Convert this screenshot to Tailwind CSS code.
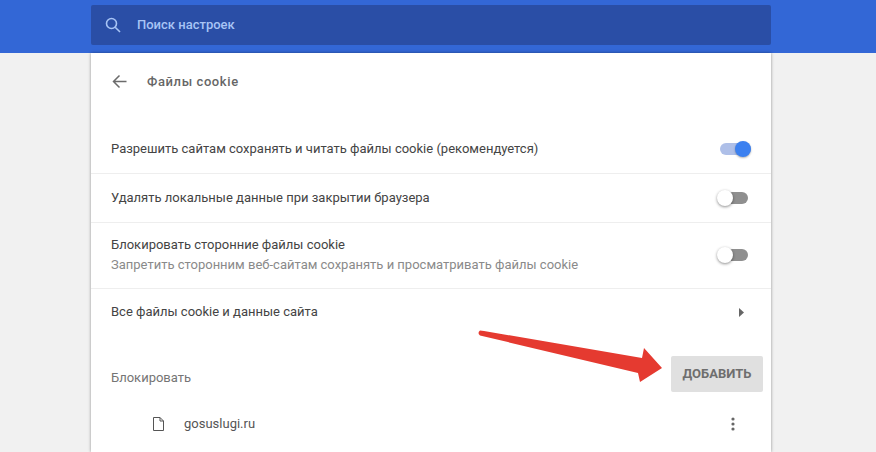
<!DOCTYPE html>
<html lang="ru">
<head>
<meta charset="UTF-8">
<title>Файлы cookie</title>
<script src="https://cdn.jsdelivr.net/npm/@tailwindcss/browser@4"></script>
</head>
<body class="relative h-[452px] w-[876px] overflow-hidden bg-[#f1f1f1] font-['Roboto',sans-serif] text-[13px] text-[#444]">
  <!-- header -->
  <header class="h-[53px] bg-[#3367d6] pt-[5px]">
    <div class="ml-[91px] flex h-[40px] w-[680px] items-center rounded-[2px] bg-[#2a4ea6] pl-[13px] text-[#a8c4f5]">
      <svg width="18" height="18" viewBox="0 0 18 18" fill="none" stroke="#a8c4f5" stroke-width="1.6"><circle cx="7.5" cy="7.5" r="5"/><path d="M11.2 11.2 16 16"/></svg>
      <span class="ml-[15px] font-medium">Поиск настроек</span>
    </div>
  </header>

  <!-- card -->
  <main class="ml-[91px] h-[399px] w-[680px] bg-white shadow-[0_0_3px_rgba(0,0,0,0.4)]">
    <div class="flex h-[56px] items-center pl-[20px]">
      <svg width="17" height="17" viewBox="0 0 17 17" fill="none" stroke="#6b6b6b" stroke-width="1.5"><path d="M15.5 8.5H2.5M8.5 2.5l-6 6 6 6"/></svg>
      <span class="ml-[19px] pt-[1px] text-[13px] font-medium tracking-[0.6px] text-[#666]">Файлы cookie</span>
    </div>
    <div class="h-[16px]"></div>

    <div class="flex h-[49px] items-center justify-between border-b border-[#eee] pl-[20px] pr-[20px]">
      <span>Разрешить сайтам сохранять и читать файлы cookie (рекомендуется)</span>
      <div class="relative h-[12px] w-[31px] rounded-full bg-[#aebfe8]">
        <div class="absolute right-0 top-[-2px] h-[16px] w-[16px] rounded-full bg-[#3b80f0] shadow-[0_1px_2px_rgba(0,0,0,0.3)]"></div>
      </div>
    </div>

    <div class="flex h-[49px] items-center justify-between border-b border-[#eee] pl-[20px] pr-[23px]">
      <span>Удалять локальные данные при закрытии браузера</span>
      <div class="relative h-[12px] w-[28px] rounded-full bg-[#8f8f8f]">
        <div class="absolute left-[-3px] top-[-2px] h-[16px] w-[16px] rounded-full bg-white shadow-[0_1px_3px_rgba(0,0,0,0.45)]"></div>
      </div>
    </div>

    <div class="flex h-[66px] items-center justify-between border-b border-[#eee] pb-[2px] pl-[20px] pr-[23px]">
      <div>
        <div class="leading-[20px]">Блокировать сторонние файлы cookie</div>
        <div class="leading-[20px] text-[#8a8a8a]">Запретить сторонним веб-сайтам сохранять и просматривать файлы cookie</div>
      </div>
      <div class="relative h-[12px] w-[28px] rounded-full bg-[#8f8f8f]">
        <div class="absolute left-[-3px] top-[-2px] h-[16px] w-[16px] rounded-full bg-white shadow-[0_1px_3px_rgba(0,0,0,0.45)]"></div>
      </div>
    </div>

    <div class="flex h-[46px] items-center justify-between pl-[20px] pr-[27px]">
      <span>Все файлы cookie и данные сайта</span>
      <svg width="5" height="9" viewBox="0 0 5 9" fill="#666"><path d="M0 0l5 4.5L0 9z"/></svg>
    </div>

    <div class="flex h-[78px] items-center justify-between pl-[20px] pr-[8px]">
      <span class="pt-[8px] text-[#757575]">Блокировать</span>
      <button class="h-[36px] w-[92px] rounded-[2px] bg-[#e0e0e0] text-[13px] font-bold text-[#6e6e6e]">ДОБАВИТЬ</button>
    </div>

    <div class="flex h-[22px] items-center justify-between pl-[62px] pr-[36px]">
      <div class="flex items-center">
        <svg width="11" height="14" viewBox="0 0 11 14" fill="none" stroke="#555" stroke-width="1"><path d="M.5.5h6.5l3.5 3.5v9.5H.5zM7 .5V4h3.5"/></svg>
        <span class="ml-[20px] text-[#555]">gosuslugi.ru</span>
      </div>
      <svg width="4" height="14" viewBox="0 0 4 14" fill="#666"><circle cx="2" cy="2" r="1.6"/><circle cx="2" cy="7" r="1.6"/><circle cx="2" cy="12" r="1.6"/></svg>
    </div>
  </main>

  <!-- red annotation arrow over the page -->
  <svg class="absolute left-0 top-0" width="876" height="452" viewBox="0 0 876 452">
    <path d="M480 330.5 Q482 330.5 484 331 L642 358 L644 348 L662 368 L640 382 L638 373 L480 335.5 Q477 333 480 330.5Z" fill="#e53a30"/>
  </svg>
</body>
</html>
